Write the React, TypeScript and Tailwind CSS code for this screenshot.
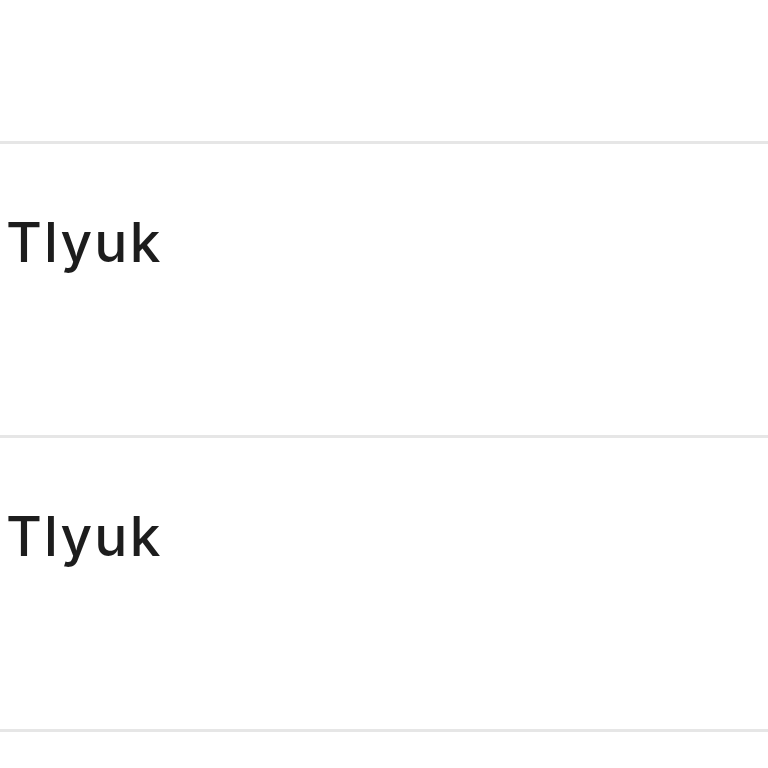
export default function App() {
  const rows = ["Tlyuk", "Tlyuk"];
  return (
    <div className="h-[768px] w-[768px] overflow-hidden bg-white" style={{ fontFamily: "Inter, 'Open Sans', sans-serif" }}>
      <div className="h-[141px]" />
      <div className="border-t-[3px] border-[#e6e6e6]">
        {rows.map((name, i) => (
          <div key={i} className="h-[294px] border-b-[3px] border-[#e6e6e6] pl-[6px] pt-[71px]">
            <span className="block text-[55px] font-medium leading-none tracking-[0.04em] text-[#1d1d1d]">{name}</span>
          </div>
        ))}
      </div>
    </div>
  );
}
